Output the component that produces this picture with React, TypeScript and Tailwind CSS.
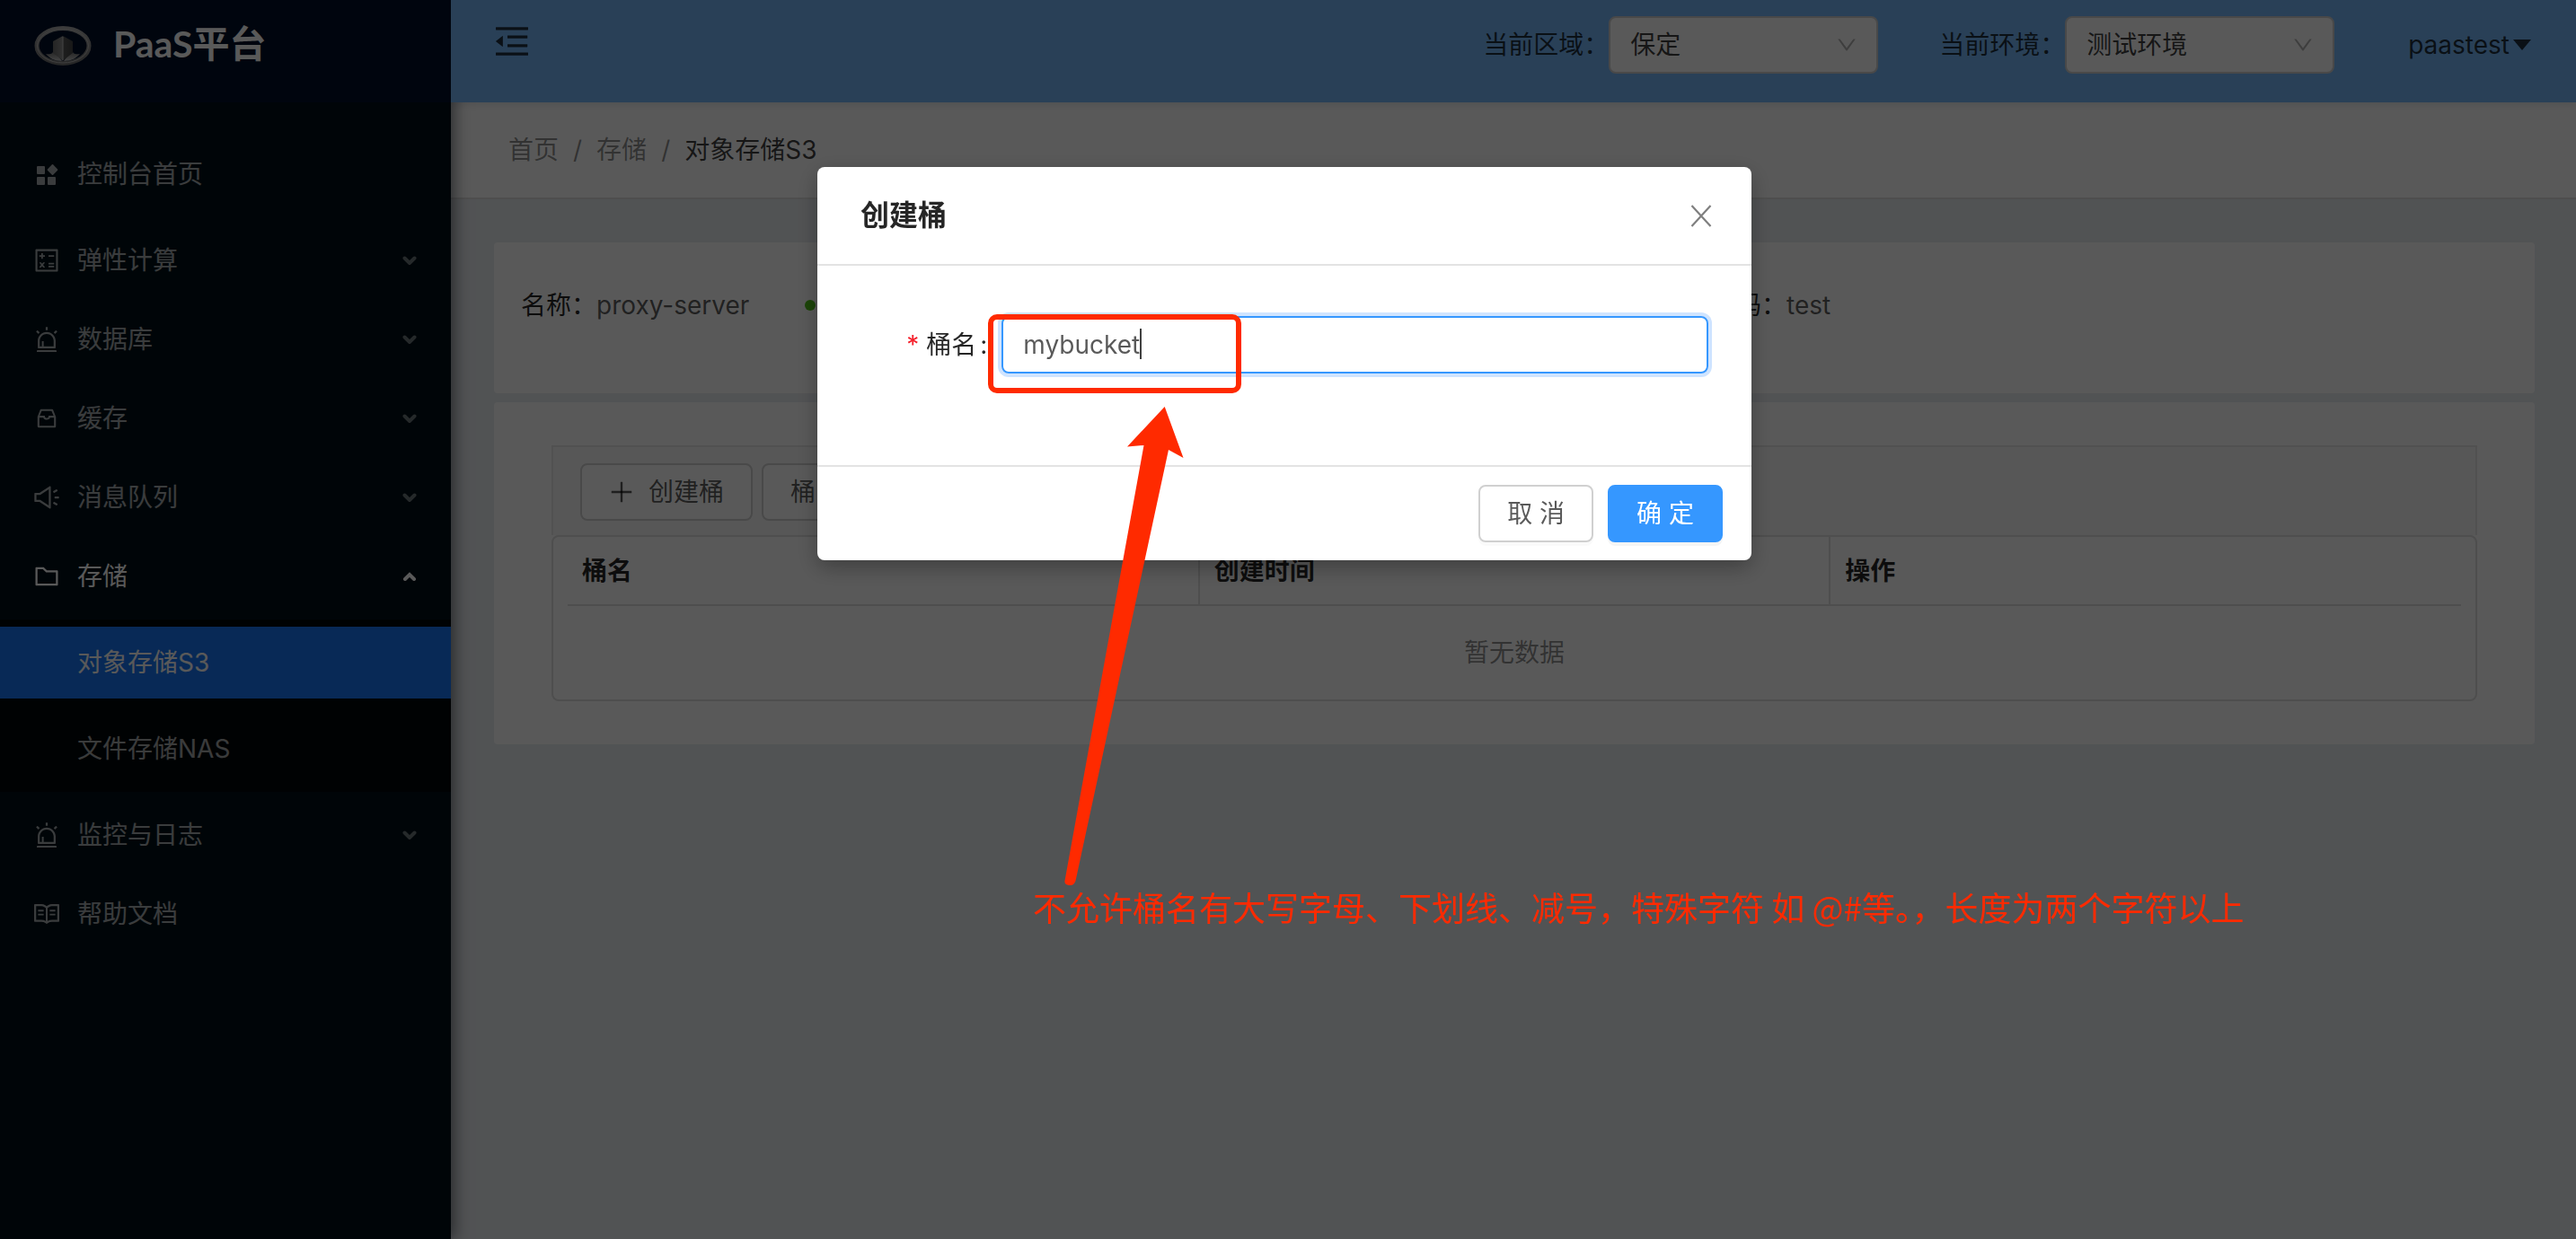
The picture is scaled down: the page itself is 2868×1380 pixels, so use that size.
import React from "react";
import {
  AiOutlineAlert,
  AiOutlineCalculator,
  AiOutlineDown,
  AiOutlineFolder,
  AiOutlineInbox,
  AiOutlineMenuFold,
  AiOutlinePlus,
  AiOutlineRead,
  AiOutlineSound,
} from "react-icons/ai";

function DashboardIcon() {
  return (
    <svg viewBox="-2 -3 32 32" className="size-8" fill="currentColor" aria-hidden="true">
      <rect x="3" y="4" width="9" height="9" rx="1" />
      <rect x="3" y="16" width="9" height="9" rx="1" />
      <rect x="15" y="16" width="9" height="9" rx="1" />
      <path d="M19.900 2.200a1 1 0 0 1 1.200 0l5 5.300a1 1 0 0 1 0 1.200l-5 5.100a1 1 0 0 1-1.200 0l-5-5.100a1 1 0 0 1 0-1.200z" />
    </svg>
  );
}

function Chevron({ open }: { open?: boolean }) {
  return (
    <svg
      viewBox="0 0 16 10"
      className={open ? "h-[10px] w-4" : "h-[10px] w-4 opacity-65"}
      fill="none"
      stroke="currentColor"
      strokeWidth="4"
      strokeLinecap="round"
      aria-hidden="true"
    >
      <path d={open ? "M3 8l5-5 5 5" : "M2.500 2.500L8 8l5.500-5.500"} />
    </svg>
  );
}

function CloseIcon() {
  return (
    <svg viewBox="0 0 32 32" className="size-8" fill="none" stroke="currentColor" strokeWidth="2.200" aria-hidden="true">
      <path d="M5.500 5l21 23M26.500 5l-21 23" />
    </svg>
  );
}

function Logo() {
  return (
    <svg viewBox="0 0 64 44" className="h-11 w-16" aria-hidden="true">
      <defs>
        <linearGradient id="ring" x1="0" y1="0" x2="0" y2="1">
          <stop offset="0" stopColor="#a8a8a8" />
          <stop offset="0.5" stopColor="#8c8c8c" />
          <stop offset="1" stopColor="#707070" />
        </linearGradient>
        <linearGradient id="horn" x1="0" y1="0" x2="0" y2="1">
          <stop offset="0" stopColor="#585858" />
          <stop offset="1" stopColor="#c4c4c4" />
        </linearGradient>
        <linearGradient id="left" x1="0" y1="0" x2="1" y2="0">
          <stop offset="0" stopColor="#6a6a6a" />
          <stop offset="1" stopColor="#8e8e8e" />
        </linearGradient>
        <linearGradient id="right" x1="0" y1="0" x2="1" y2="0">
          <stop offset="0" stopColor="#5a5a5a" />
          <stop offset="1" stopColor="#454545" />
        </linearGradient>
      </defs>
      <ellipse cx="32" cy="22" rx="29" ry="19.500" fill="none" stroke="url(#ring)" strokeWidth="5" />
      <ellipse cx="32" cy="22" rx="28.500" ry="19" fill="none" stroke="#b8b8b8" strokeWidth="1" />
      <path d="M13 31c5 1 8 0 9-5l9 13c-8 0-14-3-18-8zM51 31c-5 1-8 0-9-5l-9 13c8 0 14-3 18-8z" fill="url(#horn)" />
      <path d="M32 11l-11 6v13c4 3 8 6 11 9z" fill="url(#left)" />
      <path d="M32 11l11 6v13c-4 3-8 6-11 9z" fill="url(#right)" />
      <path d="M32 12v26" stroke="#c0c0c0" strokeWidth="1" />
    </svg>
  );
}

type Item = { label: string; icon: React.ReactNode; arrow?: boolean };

const topItems: Item[] = [
  { label: "弹性计算", icon: <AiOutlineCalculator size={32} />, arrow: true },
  { label: "数据库", icon: <AiOutlineAlert size={32} />, arrow: true },
  { label: "缓存", icon: <AiOutlineInbox size={28} />, arrow: true },
  { label: "消息队列", icon: <AiOutlineSound size={32} />, arrow: true },
];

const bottomItems: Item[] = [
  { label: "监控与日志", icon: <AiOutlineAlert size={32} />, arrow: true },
  { label: "帮助文档", icon: <AiOutlineRead size={32} /> },
];

function MenuItem({ label, icon, arrow, open }: Item & { open?: boolean }) {
  return (
    <button
      type="button"
      className={
        "flex h-20 w-full items-center gap-[18px] pl-9 pr-[38px] text-left " + (open ? "text-white" : "text-white/65")
      }
    >
      <span className="flex w-8 shrink-0 items-center justify-center">{icon}</span>
      <span className="flex-1">{label}</span>
      {(arrow || open) && <Chevron open={open} />}
    </button>
  );
}

function Sidebar() {
  return (
    <aside className="w-[502px] shrink-0 bg-[#001018] shadow-[4px_0_16px_rgba(0,10,20,0.5)]">
      <div className="flex h-[114px] items-start gap-6 bg-[#001129] pl-[38px] pt-[21px]">
        <div className="pt-2">
          <Logo />
        </div>
        <h1 className="font-['Lato','Noto_Sans_CJK_SC',sans-serif] text-[41px] leading-[56px] font-bold text-white">
          PaaS平台
        </h1>
      </div>
      <nav className="flex flex-col gap-2 pt-10">
        <div className="mb-2">
          <MenuItem label="控制台首页" icon={<DashboardIcon />} />
        </div>
        {topItems.map((i) => (
          <MenuItem key={i.label} {...i} />
        ))}
        <div>
          <MenuItem label="存储" icon={<AiOutlineFolder size={32} />} open />
          <div className="mt-2 flex flex-col gap-4 bg-[#00060b] py-2">
            <a href="#s3" className="flex h-20 items-center bg-[#1777f5] pl-[86px] text-white">
              对象存储S3
            </a>
            <a href="#nas" className="flex h-20 items-center pl-[86px] text-white/65">
              文件存储NAS
            </a>
          </div>
        </div>
        {bottomItems.map((i) => (
          <MenuItem key={i.label} {...i} />
        ))}
      </nav>
    </aside>
  );
}

function HeaderSelect({ id, label, value }: { id: string; label: string; value: string }) {
  return (
    <div className="flex items-center">
      <label htmlFor={id}>{label}</label>
      <div className="relative">
        <select
          id={id}
          defaultValue={value}
          className="h-16 w-[300px] appearance-none rounded-lg border-2 border-[#d0d0d0] bg-white pl-[22px] pr-12"
        >
          <option>{value}</option>
        </select>
        <AiOutlineDown size={26} className="pointer-events-none absolute right-[22px] top-[19px] text-black/30" />
      </div>
    </div>
  );
}

function Header() {
  return (
    <header className="relative z-10 flex h-[114px] items-start bg-[#77b8fa] pl-[45px] pr-[50px] pt-[18px] text-black/75 shadow-[0_2px_8px_rgba(0,21,41,0.12)]">
      <button type="button" aria-label="收起菜单" className="pt-[5px]">
        <AiOutlineMenuFold size={46} />
      </button>
      <div className="ml-auto flex h-16 items-center">
        <HeaderSelect id="region" label="当前区域：" value="保定" />
        <div className="ml-[68px]">
          <HeaderSelect id="env" label="当前环境：" value="测试环境" />
        </div>
        <button type="button" className="ml-[82px] flex items-center gap-1">
          paastest
          <svg viewBox="0 0 20 12" className="h-3 w-5" fill="currentColor" aria-hidden="true">
            <path d="M0 0h20L10 12z" />
          </svg>
        </button>
      </div>
    </header>
  );
}

function Content() {
  return (
    <main>
      <nav className="flex h-[108px] items-center gap-4 border-b-2 border-[#e0e0e0] bg-white pl-16 text-black/45">
        <a href="#home">首页</a>
        <span>/</span>
        <a href="#storage">存储</a>
        <span>/</span>
        <span className="text-black/75">对象存储S3</span>
      </nav>
      <div className="flex flex-col gap-[10px] pb-12 pl-12 pr-[46px] pt-12">
        <section className="grid grid-cols-[316px_1037px_1fr] items-center rounded bg-white pb-[76px] pl-[30px] pt-12 leading-[44px]">
          <div className="text-black/65">
            <span className="text-black/85">名称：</span>proxy-server
          </div>
          <div role="img" aria-label="运行中" className="size-3 rounded-full bg-[#52c41a]" />
          <div className="text-black/65">
            <span className="text-black/85">码：</span>test
          </div>
        </section>
        <section className="rounded bg-white px-16 py-12">
          <div className="flex gap-[10px] border-2 border-b-0 border-[#e8e8e8] bg-[#fafafa] px-[30px] pb-4 pt-[18px]">
            <button
              type="button"
              className="flex h-16 items-center gap-[14px] rounded-lg border-2 border-[#d0d0d0] bg-white pl-7 pr-[30px] text-black/65"
            >
              <AiOutlinePlus size={32} />
              创建桶
            </button>
            <button
              type="button"
              className="h-16 w-[192px] rounded-lg border-2 border-[#d0d0d0] bg-white px-[30px] text-left text-black/65"
            >
              桶
            </button>
          </div>
          <div className="rounded-lg border-2 border-[#dedede] px-4">
            <table className="w-full table-fixed border-collapse">
              <thead>
                <tr className="h-[76px] border-b-2 border-[#dedede] text-left text-black/85">
                  <th className="border-r-2 border-[#dedede] pl-4 font-semibold">桶名</th>
                  <th className="border-r-2 border-[#dedede] pl-4 font-semibold">创建时间</th>
                  <th className="pl-4 font-semibold">操作</th>
                </tr>
              </thead>
              <tbody>
                <tr className="h-[105px] text-center text-black/45">
                  <td colSpan={3}>暂无数据</td>
                </tr>
              </tbody>
            </table>
          </div>
        </section>
      </div>
    </main>
  );
}

function CreateBucketDialog() {
  return (
    <div
      role="dialog"
      aria-labelledby="dialog-title"
      className="relative w-[1040px] rounded-lg bg-white text-black/65 shadow-[0_8px_24px_rgba(0,0,0,0.3)]"
    >
      <div className="flex h-[110px] items-center justify-between border-b-2 border-[#e3e3e3] pl-12 pr-10">
        <h2 id="dialog-title" className="text-[32px] font-semibold text-black/85">
          创建桶
        </h2>
        <button type="button" aria-label="关闭" className="text-black/50">
          <CloseIcon />
        </button>
      </div>
      <form className="grid h-[222px] grid-cols-6 items-start px-12 pt-14">
        <label htmlFor="bucket" className="flex h-16 items-center justify-end pr-4 text-black/85">
          <span className="mr-2 text-[#f5222d]">*</span>
          桶名<span className="pl-1">:</span>
        </label>
        <div className="relative col-span-5">
          <input
            id="bucket"
            defaultValue="mybucket"
            className="h-16 w-full rounded-lg border-2 border-[#3597ff] px-[22px] shadow-[0_0_0_4px_#cfe4ff] outline-none"
          />
          <span className="absolute left-[154px] top-[14px] h-[34px] w-[2px] bg-black/75" />
        </div>
      </form>
      <div className="flex justify-end gap-4 border-t-2 border-[#e3e3e3] px-8 pb-5 pt-5">
        <button type="button" className="h-16 rounded-lg border-2 border-[#d0d0d0] px-[30px] shadow-[0_4px_0_rgba(0,0,0,0.02)]">
          取 消
        </button>
        <button
          type="button"
          className="h-16 rounded-lg border-2 border-[#3597ff] bg-[#3597ff] px-[30px] text-white shadow-[0_4px_0_rgba(0,0,0,0.04)]"
        >
          确 定
        </button>
      </div>

      {/* Hand-drawn notes laid over the dialog */}
      <div className="pointer-events-none absolute left-[190px] top-[164px] h-[88px] w-[282px] rounded-[10px] border-[6px] border-[#ff2a00]" />
      <svg
        viewBox="0 0 136 540"
        className="pointer-events-none absolute left-[274px] top-[262px] h-[540px] w-[136px]"
        fill="#ff2a00"
        aria-hidden="true"
      >
        <path d="M112.700 5L71 49.500l18.500-1.500L1.500 533c-.5 3 1 4.500 5 5 4 .4 5.500-1 7-5L117 53l16.500 9z" />
      </svg>
      <p className="pointer-events-none absolute left-60 top-[796px] whitespace-nowrap font-['Noto_Sans_CJK_SC',sans-serif] text-[37px] leading-[56px] text-[#ff2a00]">
        不允许桶名有大写字母、下划线、减号，特殊字符 如 @#等。，长度为两个字符以上
      </p>
    </div>
  );
}

export default function App() {
  return (
    <div className="flex min-h-screen bg-[#e9edf1] font-['Inter','Noto_Sans_CJK_SC',sans-serif] text-[28px] leading-[44px]">
      <div className="relative z-0 flex min-h-screen">
        <Sidebar />
      </div>
      <div className="min-w-0 flex-1">
        <Header />
        <Content />
      </div>
      <div className="fixed inset-0 z-20 flex items-start justify-center bg-black/65 pr-2 pt-[186px]">
        <CreateBucketDialog />
      </div>
    </div>
  );
}
